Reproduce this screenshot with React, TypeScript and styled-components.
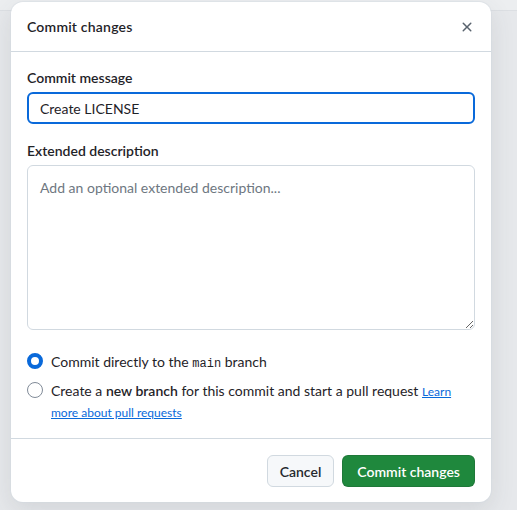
import React, { useState } from 'react';
import styled, { createGlobalStyle } from 'styled-components';

const GlobalStyle = createGlobalStyle`
  * { box-sizing: border-box; }
  body {
    margin: 0;
    font-family: Lato, "Noto Sans", "Liberation Sans", sans-serif;
    color: #1f2328;
  }
`;

const App = () => {
  const [message, setMessage] = useState('Create LICENSE');
  const [target, setTarget] = useState<'direct' | 'branch'>('direct');

  return (
    <>
      <GlobalStyle />
      <Backdrop>
        <PageHeader />
        <Dialog role="dialog" aria-labelledby="commit-title">
          <DialogHeader>
            <DialogTitle id="commit-title">Commit changes</DialogTitle>
            <CloseButton aria-label="Close">
              <svg width="16" height="16" viewBox="0 0 16 16" fill="#59636e">
                <path d="M3.72 3.72a.75.75 0 0 1 1.06 0L8 6.94l3.22-3.22a.749.749 0 0 1 1.275.326.749.749 0 0 1-.215.734L9.06 8l3.22 3.22a.749.749 0 0 1-.326 1.275.749.749 0 0 1-.734-.215L8 9.06l-3.22 3.22a.751.751 0 0 1-1.042-.018.751.751 0 0 1-.018-1.042L6.94 8 3.72 4.78a.75.75 0 0 1 0-1.06Z" />
              </svg>
            </CloseButton>
          </DialogHeader>

          <DialogBody>
            <Field>
              <Label htmlFor="commit-message">Commit message</Label>
              <TextInput
                id="commit-message"
                value={message}
                autoFocus
                onChange={(e) => setMessage(e.target.value)}
              />
            </Field>

            <Field>
              <Label htmlFor="commit-description">Extended description</Label>
              <TextArea
                id="commit-description"
                placeholder="Add an optional extended description..."
              />
            </Field>

            <RadioGroup>
              <RadioRow>
                <Radio
                  type="radio"
                  name="commit-choice"
                  checked={target === 'direct'}
                  onChange={() => setTarget('direct')}
                />
                <RadioText>
                  Commit directly to the <Code>main</Code> branch
                </RadioText>
              </RadioRow>
              <RadioRow>
                <Radio
                  type="radio"
                  name="commit-choice"
                  checked={target === 'branch'}
                  onChange={() => setTarget('branch')}
                />
                <RadioText>
                  Create a <strong>new branch</strong> for this commit and start a pull request{' '}
                  <SmallLink href="#">Learn more about pull requests</SmallLink>
                </RadioText>
              </RadioRow>
            </RadioGroup>
          </DialogBody>

          <DialogFooter>
            <Button>Cancel</Button>
            <Button primary>Commit changes</Button>
          </DialogFooter>
        </Dialog>
      </Backdrop>
    </>
  );
};

export default App;

const Backdrop = styled.div`
  position: relative;
  width: 100%;
  height: 510px;
  background: #e6e8eb;
  overflow: hidden;
`;

const PageHeader = styled.div`
  height: 11px;
  background: #eceef0;
  border-bottom: 1px solid #dcdfe3;
`;

const Dialog = styled.div`
  position: absolute;
  top: 2px;
  left: 11px;
  width: 480px;
  display: flex;
  flex-direction: column;
  background: #ffffff;
  border-radius: 12px;
  box-shadow: 0 0 0 1px rgba(209, 217, 224, 0.4), 0 8px 24px rgba(66, 74, 83, 0.12);
  overflow: hidden;
`;

const DialogHeader = styled.div`
  flex-shrink: 0;
  height: 50px;
  display: flex;
  align-items: center;
  justify-content: space-between;
  padding: 0 8px 0 16px;
  border-bottom: 1px solid #d1d9e0;
`;

const DialogTitle = styled.h1`
  margin: 0;
  font-size: 14px;
  font-weight: 600;
  line-height: 20px;
  letter-spacing: 0.2px;
`;

const CloseButton = styled.button`
  width: 32px;
  height: 32px;
  display: flex;
  align-items: center;
  justify-content: center;
  border: 0;
  border-radius: 6px;
  background: transparent;
  padding: 0;
  cursor: pointer;
`;

const DialogBody = styled.div`
  display: flex;
  flex-direction: column;
  gap: 17px;
  padding: 16px;
`;

const Field = styled.div`
  display: flex;
  flex-direction: column;
  gap: 4px;
`;

const Label = styled.label`
  font-size: 14px;
  font-weight: 600;
  line-height: 20px;
`;

const TextInput = styled.input`
  height: 32px;
  width: 100%;
  padding: 0 11px;
  font-family: inherit;
  font-size: 14px;
  color: #1f2328;
  border: 2px solid #0969da;
  border-radius: 6px;
  outline: none;
  caret-color: #1f2328;
`;

const TextArea = styled.textarea`
  height: 165px;
  width: 100%;
  padding: 12px;
  font-family: inherit;
  font-size: 14px;
  line-height: 20px;
  color: #1f2328;
  border: 1px solid #d1d9e0;
  border-radius: 6px;
  resize: vertical;
  outline: none;

  &::placeholder {
    color: #6e7781;
  }
`;

const RadioGroup = styled.div`
  display: flex;
  flex-direction: column;
  gap: 8px;
  margin-top: 4px;
`;

const RadioRow = styled.label`
  display: flex;
  align-items: flex-start;
  gap: 8px;
`;

const Radio = styled.input`
  appearance: none;
  flex-shrink: 0;
  width: 16px;
  height: 16px;
  margin: 2px 0 0;
  border-radius: 50%;
  border: 1px solid #818b98;
  background: #ffffff;

  &:checked {
    border: 4px solid #0969da;
  }
`;

const RadioText = styled.span`
  display: block;
  font-size: 14px;
  line-height: 21px;

  strong {
    font-weight: 600;
  }
`;

const Code = styled.code`
  font-family: "Liberation Mono", "DejaVu Sans Mono", monospace;
  font-size: 12px;
  line-height: 1;
`;

const SmallLink = styled.a`
  font-size: 12px;
  line-height: 1;
  color: #0969da;
  text-decoration: underline;
`;

const DialogFooter = styled.div`
  flex-shrink: 0;
  display: flex;
  justify-content: flex-end;
  gap: 8px;
  padding: 16px 16px 15px;
  border-top: 1px solid #d1d9e0;
`;

const Button = styled.button<{ primary?: boolean }>`
  height: 32px;
  padding: 0 ${(p) => (p.primary ? '14px' : '12px')};
  font-family: inherit;
  font-size: 14px;
  font-weight: 600;
  border-radius: 6px;
  cursor: pointer;
  color: ${(p) => (p.primary ? '#ffffff' : '#25292e')};
  background: ${(p) => (p.primary ? '#1f883d' : '#f6f8fa')};
  border: 1px solid ${(p) => (p.primary ? 'rgba(31, 35, 40, 0.15)' : '#d1d9e0')};
`;
